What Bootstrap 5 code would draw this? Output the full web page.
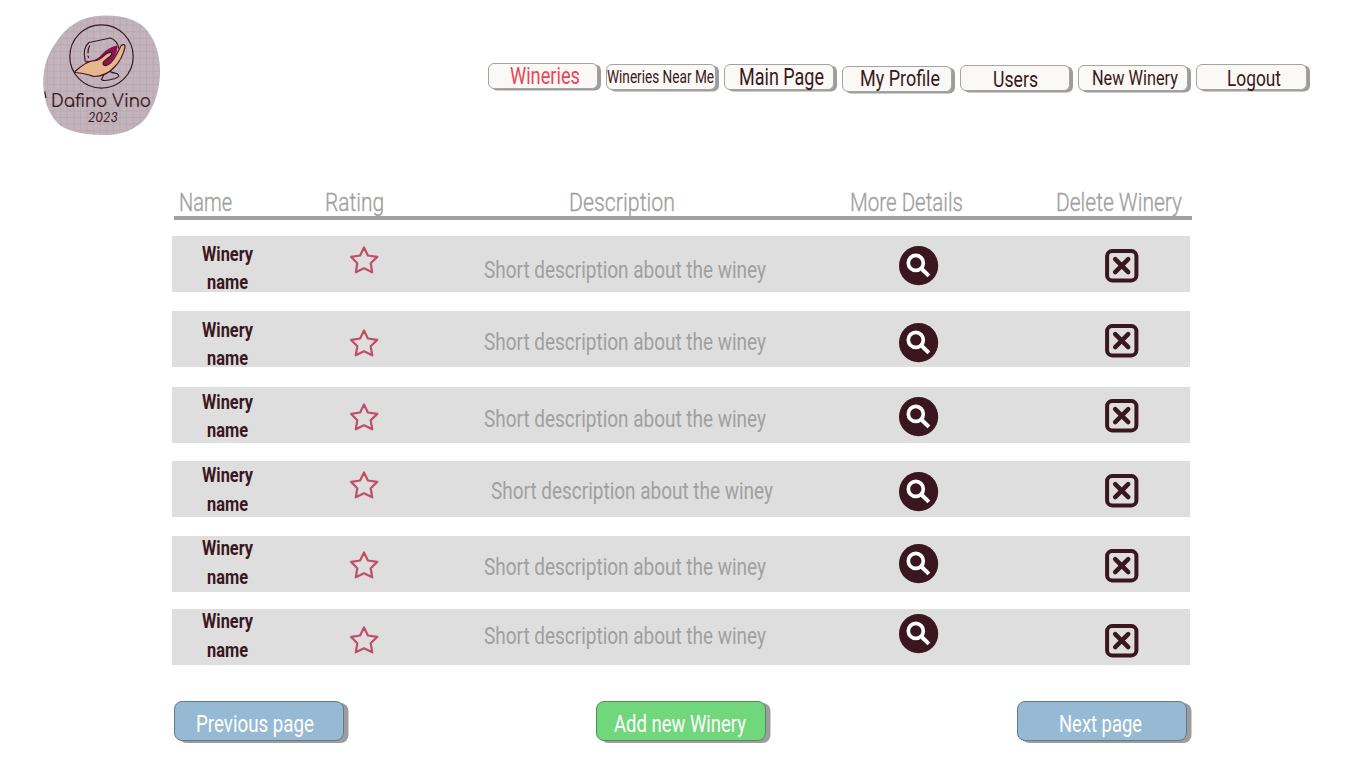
<!DOCTYPE html>
<html lang="en">
<head>
<meta charset="utf-8">
<meta name="viewport" content="width=device-width, initial-scale=1">
<title>Dafino Vino - Wineries</title>
<link href="https://cdn.jsdelivr.net/npm/bootstrap@5.3.0/dist/css/bootstrap.min.css" rel="stylesheet">
<style>
  body { font-family: Roboto, "Liberation Sans", sans-serif; color: #3a1720; background: #fff; height: 768px; overflow: hidden; }
  /* condensed labels: the box takes data-w pixels, the text is squeezed into it */
  .fit { display: block; flex: none; white-space: nowrap; line-height: inherit; }
  .fit > span { display: inline-block; transform-origin: 0 50%; }
  .site-head { height: 193px; padding: 15px 0 0 42px; }
  .menu { margin: 48px 0 0 326.5px; gap: 7.6px; }
  .menu .btn { width: 110.5px; height: 26px; padding: 0; border: 1px solid #a5a3a3; border-radius: 6px; background: #faf9f5; box-shadow: 3px 1.5px 0 #9d9d9d; color: #3a1720; font-size: 22.4px; line-height: 24px; display: flex; justify-content: center; }
  .menu .btn:first-child { color: #ee4358; font-size: 23.4px; padding-left: 4px; }
  .menu .btn:nth-child(2) { font-size: 18px; margin-top: 1px; }
  .menu .btn:nth-child(3) { font-size: 23.4px; margin-top: 1px; padding-left: 5px; }
  .menu .btn:nth-child(4) { margin-top: 3px; padding-left: 5px; line-height: 23px; }
  .menu .btn:nth-child(5) { margin-top: 2px; line-height: 26px; }
  .menu .btn:nth-child(6) { margin-top: 2px; padding-left: 4px; font-size: 21px; line-height: 25px; }
  .menu .btn:nth-child(7) { margin-top: 1px; padding-left: 5px; line-height: 26px; }
  .heads { margin-left: 174px; padding-left: 5px; width: 1018px; height: 27px; border-bottom: 4px solid #a0a0a0; color: #a0a0a0; font-size: 26.5px; font-weight: 300; line-height: 18.5px; -webkit-text-stroke: .35px #a0a0a0; }
  .heads .fit:nth-child(2), .heads .fit:nth-child(5) { margin-left: 93px; }
  .heads .fit:nth-child(3) { margin-left: 185px; }
  .heads .fit:nth-child(4) { margin-left: 175px; }
  .winery { display: grid; grid-template-columns: 70px 204px 318px 269px 137px; justify-items: center; align-items: start; width: 1018px; height: 56px; margin: var(--gap) 0 0 172px; padding-left: 20px; background: #dedede; }
  .winery > * { display: block; }
  .w-name { margin-top: var(--n); font-size: 20.8px; font-weight: 700; line-height: 28.8px; }
  .w-name .fit { margin: 0 auto; }
  .w-star { margin-top: var(--s); }
  .w-text { margin-top: var(--d); font-size: 24px; line-height: 24px; color: #a0a0a0; }
  .w-more { margin-top: var(--m); }
  .w-del { margin-top: var(--x); }
  .winery:nth-child(1) { --gap: 16px; --n: 3.6px; --s: 10px; --d: 21.8px; --m: 10px; --x: 13px; }
  .winery:nth-child(2) { --gap: 19px; --n: 4.6px; --s: 18px; --d: 18.8px; --m: 12px; --x: 13px; }
  .winery:nth-child(3) { --gap: 19.5px; --n: 1.1px; --s: 16.5px; --d: 20.3px; --m: 10.5px; --x: 12.5px; }
  .winery:nth-child(4) { --gap: 18.5px; --n: -.3px; --s: 10.3px; --d: 17.8px; --m: 10.5px; --x: 13px; }
  .winery:nth-child(4) .w-text { padding-left: 13px; }
  .winery:nth-child(5) { --gap: 19px; --n: -2.2px; --s: 14.5px; --d: 18.8px; --m: 8.4px; --x: 13px; }
  .winery:nth-child(6) { --gap: 17px; --n: -2.2px; --s: 17px; --d: 14.8px; --m: 5px; --x: 15px; }
  .pager { margin: 36px 0 0 174px; width: 1013px; }
  .pager .btn { width: 170px; height: 40px; padding: 0; border: 1px solid #66798a; border-radius: 8px; background: #96b9d4; box-shadow: 4.5px 2px 0 #9d9d9d; color: #fff; font-size: 24px; line-height: 44px; display: flex; justify-content: center; }
  .pager .btn:first-child { padding-right: 8px; }
  .pager .btn:last-child { padding-right: 4px; }
  .pager .add { background: #71d77d; border-color: #568a5d; padding-right: 2px; }
</style>
</head>
<body>
<svg class="d-none">
  <symbol id="star" viewBox="0.5 0.2 29 28"><path d="M14.500 1.600 18.400 9.700 27.800 11.100 21.200 17.500 22.700 26.500 14.500 22.500 6.300 26.500 7.800 17.500 1.700 11.100 10.600 9.700Z" fill="none" stroke="#bf4f69" stroke-width="2.200" stroke-linejoin="round"/></symbol>
  <symbol id="more" viewBox="0.4 0.3 40 40"><circle cx="20" cy="20" r="19.600" fill="#3a1720"/><circle cx="17.200" cy="17.200" r="7.500" fill="none" stroke="#fff" stroke-width="3.700"/><path d="m22.700 22.800 7.600 7.400" stroke="#fff" stroke-width="4.100"/></symbol>
  <symbol id="del" viewBox="0.4 0.3 34 34"><rect x="2.500" y="2.400" width="29.300" height="29.300" rx="5" fill="none" stroke="#3a1720" stroke-width="4"/><path d="m10.600 10.500 13 13M23.600 10.500l-13 13" stroke="#3a1720" stroke-width="4.500" stroke-linecap="round"/></symbol>
</svg>

<header class="site-head d-flex align-items-start">
  <svg width="119" height="121" viewBox="42 15 119 121" class="flex-shrink-0">
    <defs>
      <pattern id="weave" x="47" y="18" width="6.600" height="6.600" patternUnits="userSpaceOnUse"><rect width="6.600" height="6.600" fill="#c3b4bb"/><path d="M.5 0V6.600M0 .5H6.600" stroke="#b6a6af" stroke-width=".8"/></pattern>
      <clipPath id="blob"><path d="M101 15.700C120 14.500 134 18.500 144 27C155 38 160 54 160 71C160 86 156.500 100 149.500 112C142 127 125 135 105 135C86 135 70 132 60 125.500C49 115 43.500 101 43.200 83C43.200 66 48 53 56.600 41.700C66 27 80 16.800 101 15.700Z"/></clipPath>
    </defs>
    <g clip-path="url(#blob)">
      <rect x="42" y="15" width="119" height="121" fill="url(#weave)"/>
      <path d="M44.800 91.500l1.100 6.500" fill="none" stroke="#222" stroke-width="1.200"/>
    </g>
    <g fill="none" stroke="#3a1720" stroke-width="1.200" stroke-linejoin="round" stroke-linecap="round">
      <circle cx="101.500" cy="56.500" r="31.700"/>
      <path d="M85 60C83.500 53 84.500 46 89 42.500L110.500 38C115.500 40 118 44 118.500 48"/>
      <path d="M89.500 46C88 48.500 88 51 88 53M88 56l.6 1.500"/>
      <path d="M83.500 60C92 63 98 59 102.500 53.500C107 49 111 47 117 45.500C118 49 116.500 54 113 59L106 67L88 65Z" fill="#94104a" stroke="none"/>
      <path d="M106 71C105 73 102.500 77 101.500 79.500C104 82 110 80 115 78.500C119.500 77 119.500 75.500 117 73.500C114 73 111 73 108 70"/>
      <path d="M75 71.500C82 65 89 61 94.500 60.500C99.500 61 101.500 57.500 106 54C109.500 51.500 112.500 52 111.500 54.500C110.500 57.500 105 59.500 103.500 62C102 65.500 105 66.500 108.500 64.500C114 61 117.500 53 120.500 46.500C122.500 43.500 125.500 44.500 125 47C123.500 54 119.500 62 114.500 67C109 73 101 76.500 94 76.500C88 75 84 72.500 75 72.500Z" fill="#e9b58f"/>
    </g>
    <g fill="#3a1720" stroke="#3a1720" stroke-width=".2">
      <text x="51" y="107" font-family="Comfortaa, Lato, sans-serif" font-size="18" textLength="100" lengthAdjust="spacingAndGlyphs">Dafino Vino</text>
      <text x="88" y="122" font-family="Lato, sans-serif" font-style="italic" font-size="12.500" stroke="none" textLength="30" lengthAdjust="spacingAndGlyphs">2023</text>
    </g>
  </svg>
  <nav class="menu d-flex">
    <a class="btn" href="#"><span class="fit" data-w="70">Wineries</span></a>
    <a class="btn" href="#"><span class="fit" data-w="107">Wineries Near Me</span></a>
    <a class="btn" href="#"><span class="fit" data-w="85">Main Page</span></a>
    <a class="btn" href="#"><span class="fit" data-w="80">My Profile</span></a>
    <a class="btn" href="#"><span class="fit" data-w="45">Users</span></a>
    <a class="btn" href="#"><span class="fit" data-w="86">New Winery</span></a>
    <a class="btn" href="#"><span class="fit" data-w="54">Logout</span></a>
  </nav>
</header>

<main>
  <div class="heads d-flex">
    <span class="fit" data-w="53">Name</span>
    <span class="fit" data-w="59">Rating</span>
    <span class="fit" data-w="106">Description</span>
    <span class="fit" data-w="113">More Details</span>
    <span class="fit" data-w="126">Delete Winery</span>
  </div>
  <div id="wineries"></div>
  <div class="pager d-flex justify-content-between">
    <button class="btn" type="button"><span class="fit" data-w="118">Previous page</span></button>
    <button class="btn add" type="button"><span class="fit" data-w="132">Add new Winery</span></button>
    <button class="btn" type="button"><span class="fit" data-w="83">Next page</span></button>
  </div>
</main>

<script src="https://cdn.jsdelivr.net/npm/bootstrap@5.3.0/dist/js/bootstrap.bundle.min.js"></script>
<script>
  const row = `<div class="winery">
    <div class="w-name"><span class="fit" data-w="51">Winery</span><span class="fit" data-w="41">name</span></div>
    <svg class="w-star" width="29" height="28"><use href="#star"/></svg>
    <div class="w-text"><span class="fit" data-w="282">Short description about the winey</span></div>
    <svg class="w-more" width="40" height="40"><use href="#more"/></svg>
    <svg class="w-del" width="34" height="34"><use href="#del"/></svg>
  </div>`;
  document.getElementById('wineries').innerHTML = row.repeat(6);
  document.querySelectorAll('.fit').forEach(el => {
    const inner = document.createElement('span');
    inner.textContent = el.textContent;
    el.replaceChildren(inner);
    const natural = inner.getBoundingClientRect().width;
    el.style.width = el.dataset.w + 'px';
    inner.style.transform = `scaleX(${el.dataset.w / natural})`;
  });
</script>
</body>
</html>
